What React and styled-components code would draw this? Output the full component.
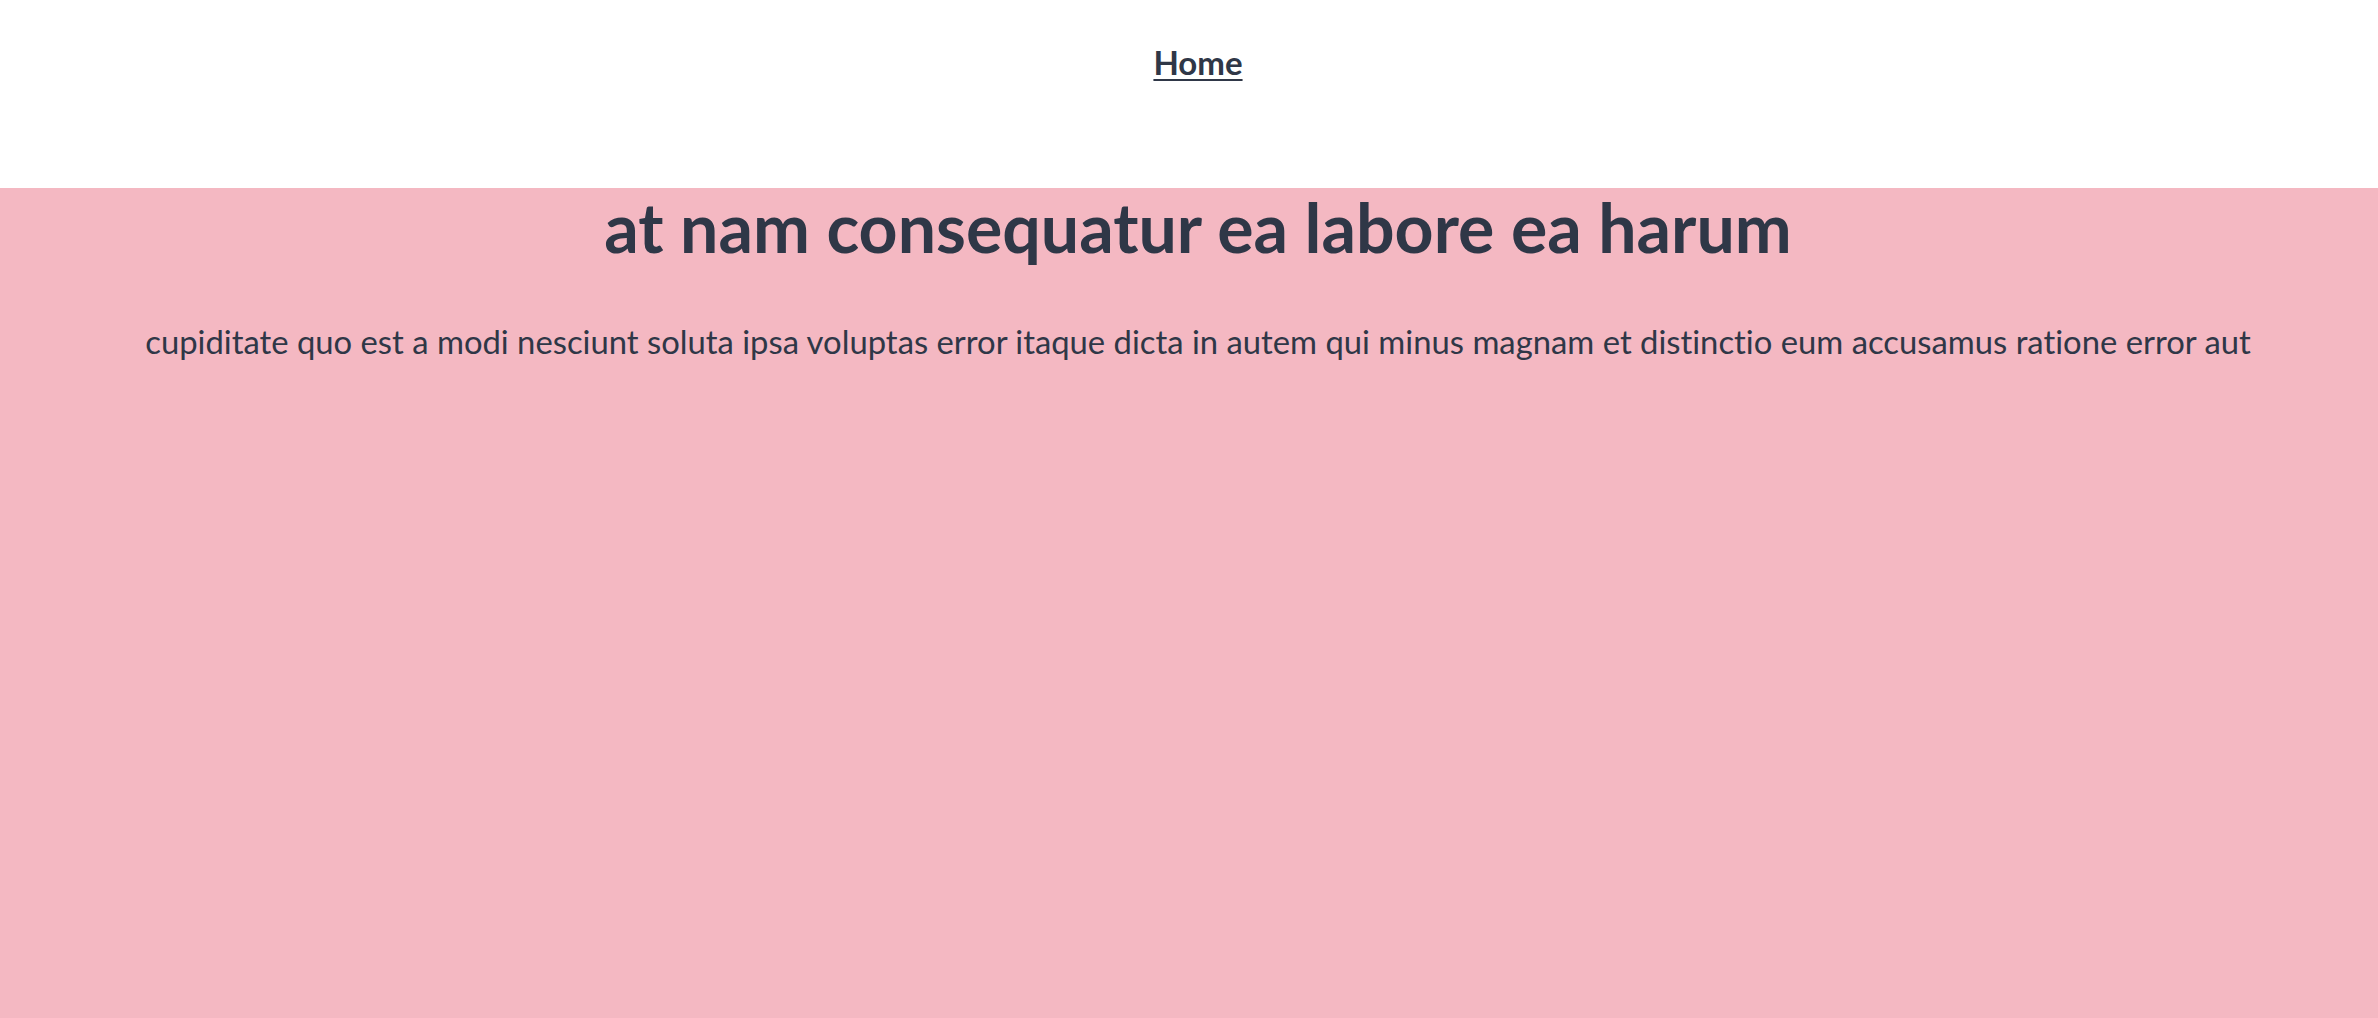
import styled, { createGlobalStyle } from 'styled-components'

const GlobalStyle = createGlobalStyle`
  html, body {
    margin: 0;
    padding: 0;
    background: #ffffff;
  }
  body {
    font-family: Lato, "Open Sans", sans-serif;
    font-variant-ligatures: none;
    color: #2f3747;
  }
`

const Header = styled.header`
  height: 188px;
  display: flex;
  justify-content: center;
  align-items: flex-start;
  padding: 46px 0 0 18px;
  box-sizing: border-box;
`

const NavLink = styled.a`
  font-size: 33px;
  font-weight: 700;
  color: #2f3747;
  text-decoration: underline;
  text-underline-offset: 4px;
  text-decoration-thickness: 2px;
  line-height: 1;
`

const Hero = styled.section`
  background: #f4b8c2;
  min-height: 830px;
  padding-left: 18px;
  display: flex;
  flex-direction: column;
  align-items: center;
  text-align: center;
`

const Title = styled.h1`
  margin: 0;
  font-size: 68px;
  font-weight: 700;
  line-height: 78px;
`

const Lead = styled.p`
  margin: 54px 0 0;
  font-size: 32.8px;
  font-weight: 400;
  line-height: 44px;
`

export default function App() {
  return (
    <>
      <GlobalStyle />
      <Header>
        <NavLink href="#">Home</NavLink>
      </Header>
      <Hero>
        <Title>at nam consequatur ea labore ea harum</Title>
        <Lead>
          cupiditate quo est a modi nesciunt soluta ipsa voluptas error itaque dicta in autem qui minus magnam et distinctio eum accusamus ratione error aut
        </Lead>
      </Hero>
    </>
  )
}
